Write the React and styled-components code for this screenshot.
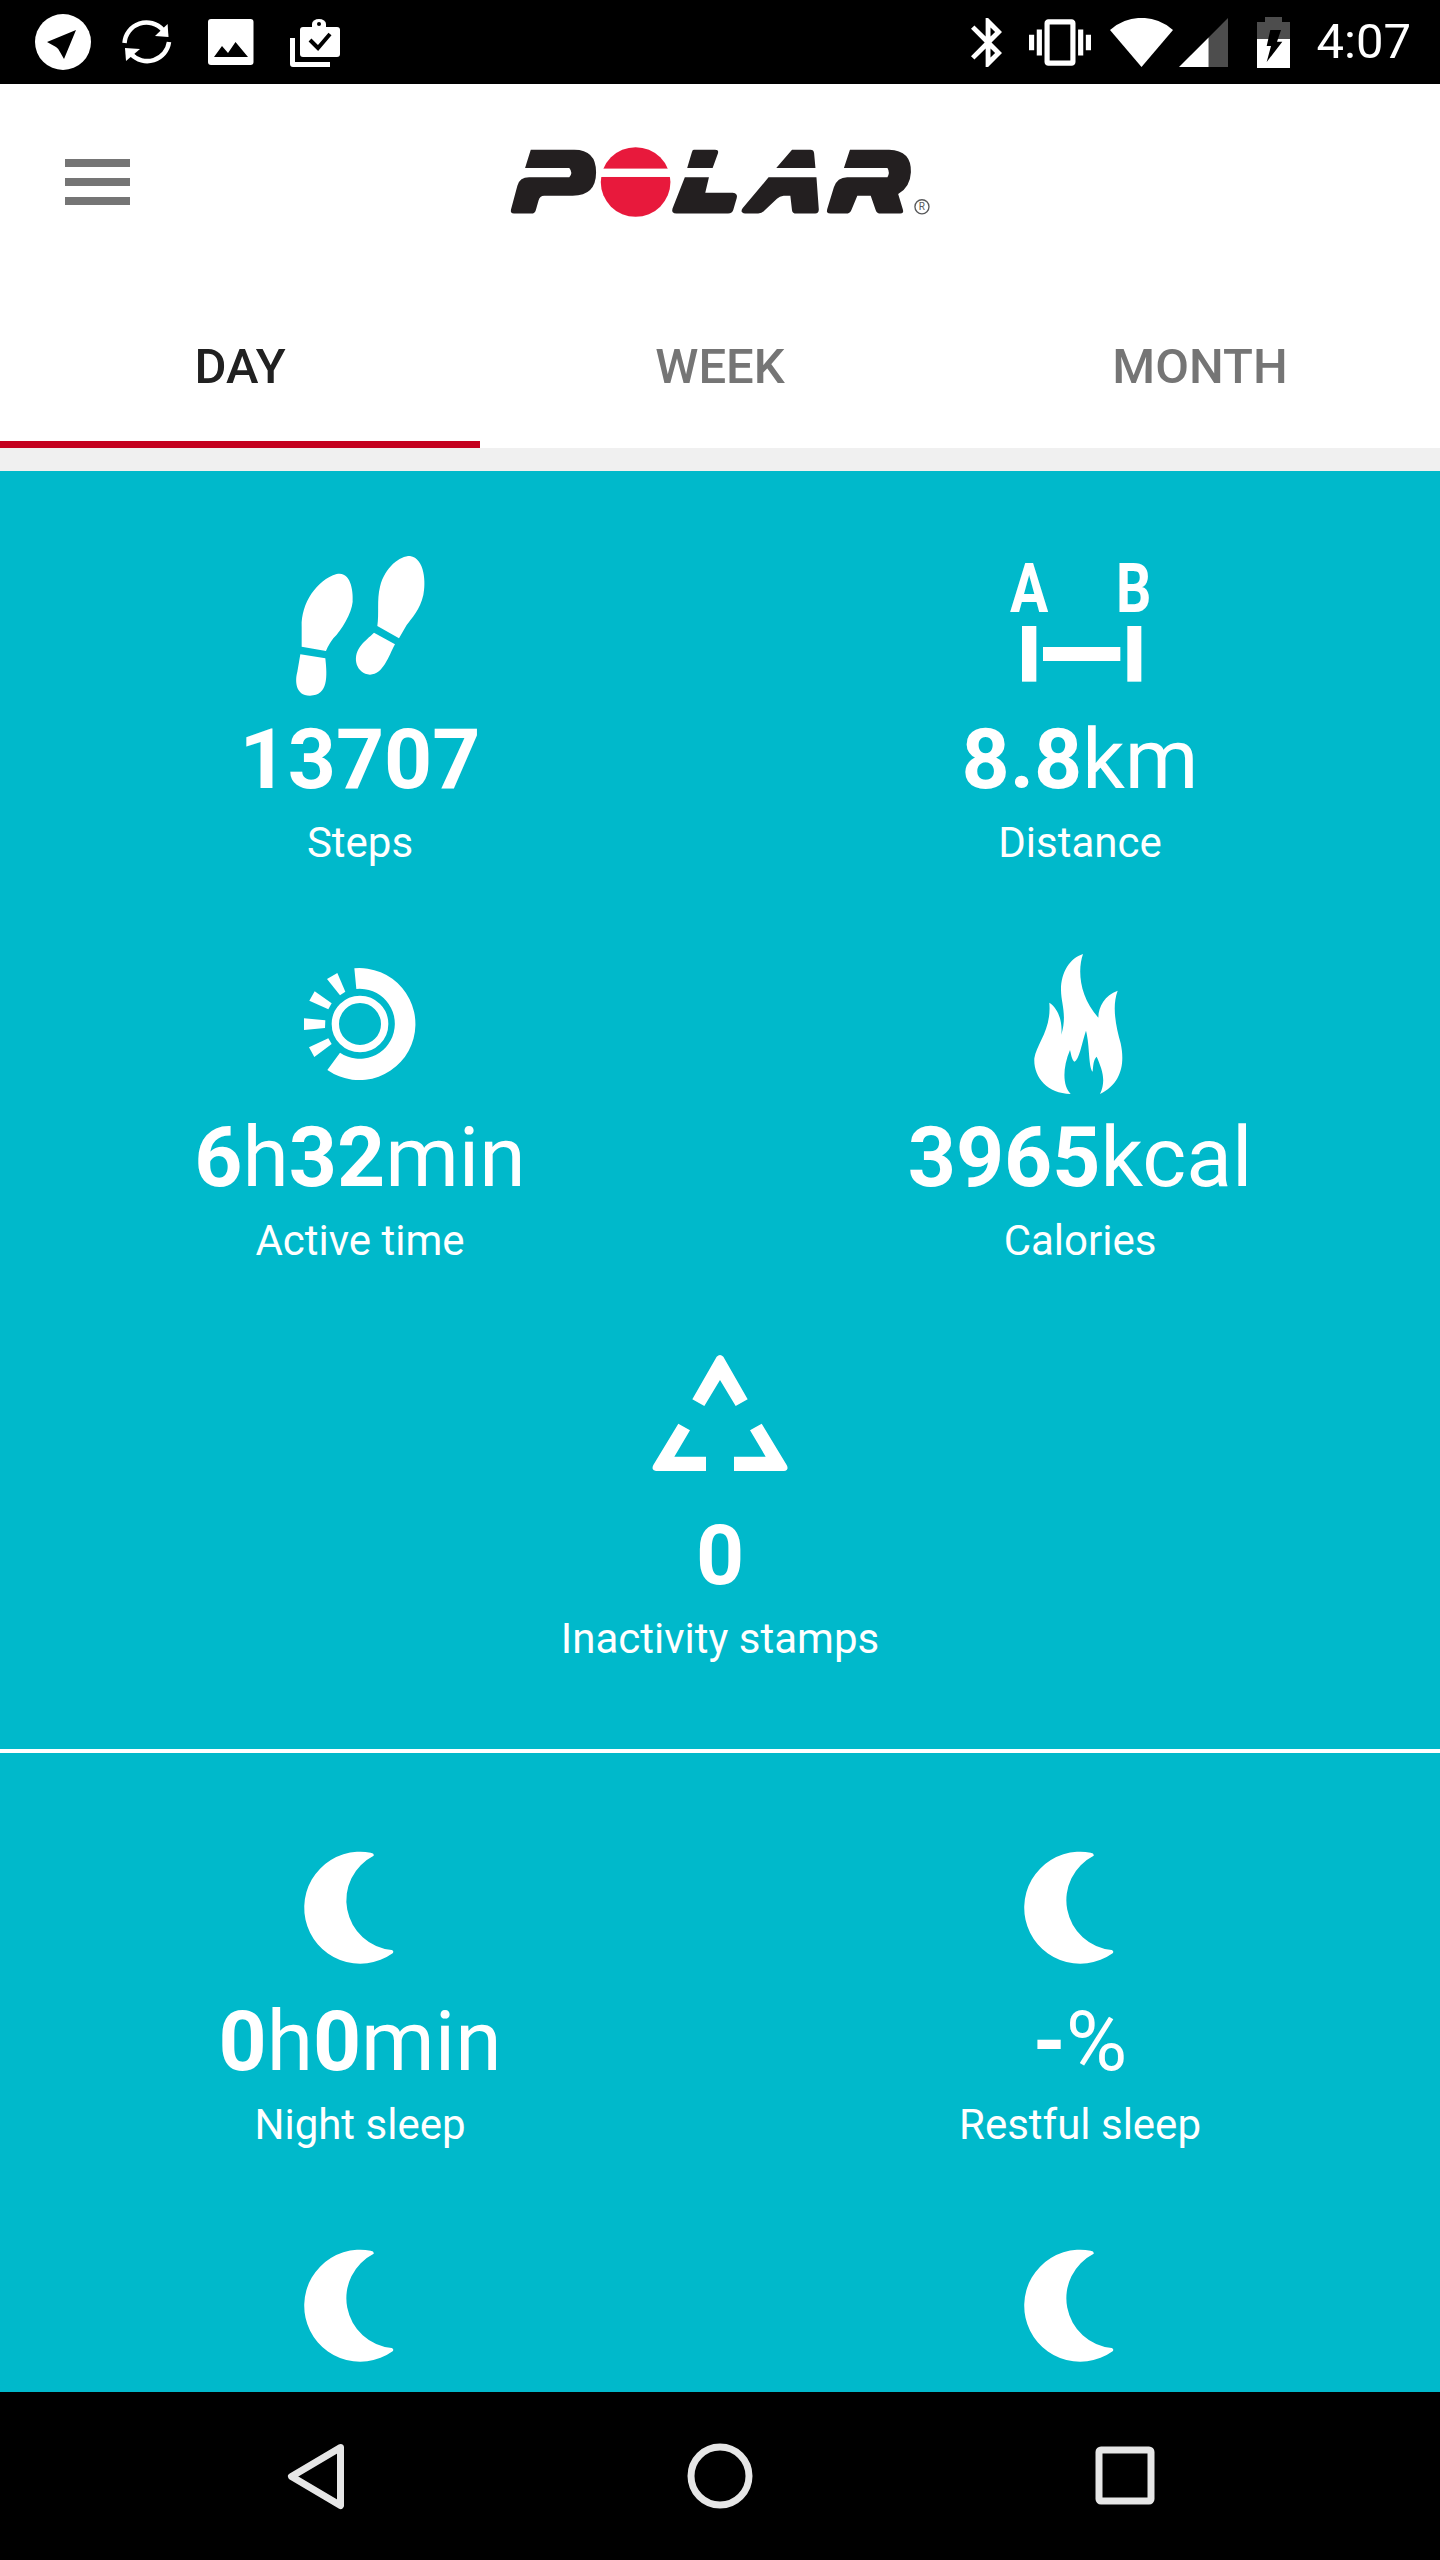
import React from "react";
import styled, { createGlobalStyle } from "styled-components";

const TEAL = "#00b9cb";

const GlobalStyle = createGlobalStyle`
  html, body {
    margin: 0;
    padding: 0;
    background: #000;
  }
  body {
    font-family: Roboto, "Liberation Sans", sans-serif;
  }
`;

// status bar drawings
const NavigationIcon = () => (
  <Slot viewBox="0 0 84 84">
    <circle cx="42" cy="42" r="28" fill="#fff" />
    <path d="M55 30 L26 42 L35 47 Q38 49 39 52 L43 59 Z" fill="#000" />
  </Slot>
);

const SyncIcon = () => (
  <Slot viewBox="0 0 84 84">
    <path d="M19.5 43 A22 22 0 0 1 58 30" fill="none" stroke="#fff" strokeWidth="4.5" />
    <path d="M64 42 A22 22 0 0 1 26 54" fill="none" stroke="#fff" strokeWidth="4.5" />
    <polygon points="62.6,24 63.5,37 50,36" fill="#fff" />
    <polygon points="20,48 35,49 21,61" fill="#fff" />
  </Slot>
);

const ImageIcon = () => (
  <Slot viewBox="0 0 84 84">
    <rect x="19" y="19" width="45.5" height="46" rx="3" fill="#fff" />
    <polygon points="25,57 33,46 39,53 46.5,42 59,57" fill="#000" />
  </Slot>
);

const ClipboardIcon = () => (
  <Slot viewBox="0 0 84 84">
    <path d="M17 38h5v24h35v5H20a3 3 0 0 1-3-3z" fill="#fff" />
    <rect x="27" y="27" width="40" height="30" rx="3" fill="#fff" />
    <path d="M39 28v-4a7 5 0 0 1 14 0v4z" fill="#fff" />
    <circle cx="46" cy="24" r="2" fill="#000" />
    <polyline points="37,40 45,48 57,34" fill="none" stroke="#000" strokeWidth="4" />
  </Slot>
);

const BluetoothIcon = () => (
  <RightIcon width="31" height="49" viewBox="5 2 12.71 20" $gap={0}>
    <path
      fill="#fff"
      d="M17.71 7.71L12 2h-1v7.59L6.41 5 5 6.41 10.59 12 5 17.59 6.41 19 11 14.41V22h1l5.71-5.71-4.3-4.29 4.3-4.29zM13 5.83l1.88 1.88L13 9.59V5.83zm1.88 10.46L13 18.17v-3.76l1.88 1.88z"
    />
  </RightIcon>
);

const VibrateIcon = () => (
  <RightIcon width="62" height="47" viewBox="0 3 24 18" $gap={27}>
    <path
      fill="#fff"
      d="M0 15h2V9H0v6zm3 2h2V7H3v10zm19-8v6h2V9h-2zm-3 8h2V7h-2v10zM16.5 3h-9C6.67 3 6 3.67 6 4.5v15c0 .83.67 1.5 1.5 1.5h9c.83 0 1.5-.67 1.5-1.5v-15c0-.83-.67-1.5-1.5-1.5zM16 19H8V5h8v14z"
    />
  </RightIcon>
);

const WifiIcon = () => (
  <RightIcon width="63" height="49" viewBox="0 0 63 49" $gap={19}>
    <path d="M31.5 49 L0 12 A47 47 0 0 1 63 12 Z" fill="#fff" />
  </RightIcon>
);

const SignalIcon = () => (
  <RightIcon width="49" height="49" viewBox="0 0 49 49" $gap={6}>
    <polygon points="29.6,19.4 49,0 49,49 29.6,49" fill="#4d4d4d" />
    <polygon points="0,49 29.6,19.4 29.6,49" fill="#fff" />
  </RightIcon>
);

const BatteryIcon = () => (
  <RightIcon width="33" height="51" viewBox="0 0 33 51" $gap={29}>
    <path d="M8 0h17v5H33v17H0V5h8z" fill="#4d4d4d" />
    <rect y="22" width="33" height="29" fill="#fff" />
    <polygon points="13.3,13 24,13 20,24.7 25.3,24.7 9.7,45 14,29 9.7,29" fill="#000" />
  </RightIcon>
);

// polar logo, drawn in a 3x coordinate space
const PolarLogo = () => (
  <Logo viewBox="60 50 1260 208" role="img" aria-label="Polar">
    <g fill="#231f20">
      <path d="M125 58H255Q320 58 320 125Q320 195 250 195H165Q152 195 148 210L140 238Q137 248 127 248H75Q63 248 66 236L85 165Q92 140 120 140H240Q252 126 240 112H108Z" />
      <path d="M612 58H675Q687 58 684 68L668 112H592L606 65Q608 58 612 58ZM585 140H657L646 186H728Q744 188 740 202L730 236Q727 248 714 248H560Q544 248 548 234Z" />
      <path d="M905 58H960Q970 58 971 68L975 112H858ZM835 140H978L985 236Q985 248 974 248H918Q906 248 905 238L900 195H880Q868 196 860 204L822 240Q815 248 804 248H765Q748 246 758 232Z" />
      <path d="M1078 58H1195Q1262 60 1260 125Q1258 170 1222 190L1236 236Q1240 248 1228 248H1170Q1158 248 1155 238L1140 195H1100L1082 238Q1078 248 1066 248H1020Q1006 248 1010 235L1030 170Q1040 140 1070 140H1190Q1198 125 1190 112H1060Z" />
    </g>
    <circle cx="438" cy="154" r="104" fill="#e8193c" />
    <rect x="325" y="114" width="226" height="25" fill="#fff" />
    <circle cx="1293" cy="228" r="21" fill="none" stroke="#58595b" strokeWidth="4" />
    <text x="1293" y="239" textAnchor="middle" fontSize="30" fontFamily="Roboto, sans-serif" fill="#58595b">
      R
    </text>
  </Logo>
);

// metric icons, each traced on a 420 unit square
const StepsIcon = () => (
  <MetricIcon viewBox="210 78 420 420">
    <path d="M245 350V290C243 220 290 150 350 132C395 122 400 190 398 215C395 250 365 300 340 325C325 345 318 363 318 363Z" />
    <path d="M241 373L316 385C322 440 325 497 270 497C225 497 225 450 232 425Z" />
    <path d="M472 288C478 250 470 210 480 170C495 110 540 78 570 78C615 85 618 160 610 195C600 240 575 265 560 285L537 325Z" />
    <path d="M462 308L525 343C505 380 490 433 450 434C410 430 395 385 420 350C430 335 450 320 462 308Z" />
  </MetricIcon>
);

const DistanceIcon = () => (
  <MetricIcon viewBox="180 78 420 420">
    <IconLetter x="180" y="245" textLength="115" lengthAdjust="spacingAndGlyphs">A</IconLetter>
    <IconLetter x="498" y="245" textLength="106" lengthAdjust="spacingAndGlyphs">B</IconLetter>
    <rect x="216" y="288" width="43" height="167" />
    <rect x="532" y="288" width="42" height="167" />
    <rect x="279" y="351" width="232" height="42" />
  </MetricIcon>
);

const ActiveIcon = () => (
  <MetricIcon viewBox="90 42 420 420">
    <circle cx="300" cy="252" r="74" fill="none" stroke="#fff" strokeWidth="22" />
    <path d="M283 85A168 168 0 1 1 202 390L240 338A105 105 0 1 0 289 147Z" />
    <polygon points="201,117 232,99 256,155 240,166" />
    <polygon points="148,182 164,154 215,190 205,208" />
    <polygon points="132,235 196,241 195,264 132,270" />
    <polygon points="147,322 205,295 215,312 163,351" />
  </MetricIcon>
);

const FlameIcon = () => (
  <MetricIcon viewBox="60 42 420 420">
    <path d="M279 42C262 90 268 170 325 233C325 200 345 165 383 152C365 200 378 260 392 310C405 370 395 430 330 462C350 420 335 385 320 350C310 360 310 375 308 395C295 380 300 320 288 272C275 310 268 360 253 365C245 360 243 340 240 330C215 390 220 440 242 462C170 460 130 410 133 355C140 310 185 270 178 188C205 205 218 245 214 284C232 225 213 190 213 150C213 95 240 55 279 42Z" />
  </MetricIcon>
);

const StampIcon = () => (
  <MetricIcon viewBox="90 66 420 420">
    <path d="M217 208L290 80Q300 70 310 80L383 208L347 228L300 150L253 228Z" />
    <path d="M175 281L210 301L163 380H258V423H108Q92 420 100 405Z" />
    <path d="M425 281L390 301L437 380H342V423H492Q508 420 500 405Z" />
  </MetricIcon>
);

const MoonIcon = () => (
  <MetricIcon viewBox="30 24 420 420">
    <path d="M272 68Q283 70 281 77A150 150 0 0 0 335 360Q343 363 338 370A168 168 0 1 1 272 68Z" />
  </MetricIcon>
);

const activityMetrics = [
  { icon: <StepsIcon />, parts: [["13707", true]], label: "Steps" },
  { icon: <DistanceIcon />, parts: [["8.8", true], ["km"]], label: "Distance" },
  {
    icon: <ActiveIcon />,
    parts: [["6", true], ["h"], ["32", true], ["min"]],
    label: "Active time",
  },
  { icon: <FlameIcon />, parts: [["3965", true], ["kcal"]], label: "Calories" },
  { icon: <StampIcon />, parts: [["0", true]], label: "Inactivity stamps", wide: true },
];

const sleepMetrics = [
  {
    icon: <MoonIcon />,
    parts: [["0", true], ["h"], ["0", true], ["min"]],
    label: "Night sleep",
  },
  { icon: <MoonIcon />, parts: [["-", true], ["%"]], label: "Restful sleep" },
  { icon: <MoonIcon /> },
  { icon: <MoonIcon /> },
];

const Metric = ({ icon, parts, label, wide }) => (
  <Cell $wide={wide}>
    {icon}
    {parts && (
      <Value>
        {parts.map(([text, strong], key) =>
          strong ? <Strong key={key}>{text}</Strong> : <span key={key}>{text}</span>
        )}
      </Value>
    )}
    {label && <Label>{label}</Label>}
  </Cell>
);

const App = () => (
  <Screen>
    <GlobalStyle />
    <StatusBar>
      <StatusGroup>
        <NavigationIcon />
        <SyncIcon />
        <ImageIcon />
        <ClipboardIcon />
      </StatusGroup>
      <StatusRight>
        <BluetoothIcon />
        <VibrateIcon />
        <WifiIcon />
        <SignalIcon />
        <BatteryIcon />
        <Clock>4:07</Clock>
      </StatusRight>
    </StatusBar>

    <Toolbar>
      <Hamburger aria-label="Menu">
        <span />
        <span />
        <span />
      </Hamburger>
      <PolarLogo />
    </Toolbar>

    <Tabs>
      <Tab $active>DAY</Tab>
      <Tab>WEEK</Tab>
      <Tab>MONTH</Tab>
    </Tabs>
    <TabShadow />

    <Content>
      <MetricGrid>
        {activityMetrics.map((m, key) => (
          <Metric key={`activity_${key}`} {...m} />
        ))}
      </MetricGrid>
      <Divider />
      <MetricGrid>
        {sleepMetrics.map((m, key) => (
          <Metric key={`sleep_${key}`} {...m} />
        ))}
      </MetricGrid>
    </Content>

    <NavBar>
      <NavIcon viewBox="0 0 84 84">
        <polygon points="66.5,13.5 17.5,42.5 66.5,71.5" />
      </NavIcon>
      <NavIcon viewBox="0 0 84 84">
        <circle cx="42" cy="42" r="29" />
      </NavIcon>
      <NavIcon viewBox="0 0 84 84">
        <rect x="17" y="16" width="52" height="51" rx="2" />
      </NavIcon>
    </NavBar>
  </Screen>
);

export default App;

const Screen = styled.div`
  display: flex;
  flex-direction: column;
  width: 1440px;
  height: 2560px;
  overflow: hidden;
  background: #fff;
`;

const StatusBar = styled.div`
  display: flex;
  justify-content: space-between;
  align-items: center;
  flex: 0 0 84px;
  padding: 0 29px 0 21px;
  background: #000;
`;

const StatusGroup = styled.div`
  display: flex;
`;

const StatusRight = styled.div`
  display: flex;
  align-items: center;
`;

const Slot = styled.svg`
  display: block;
  width: 84px;
  height: 84px;
`;

const RightIcon = styled.svg`
  display: block;
  flex: none;
  margin-left: ${({ $gap }) => $gap}px;
`;

const Clock = styled.div`
  margin-left: 27px;
  color: #fff;
  font-size: 49px;
  line-height: 84px;
`;

const Toolbar = styled.div`
  display: grid;
  grid-template-columns: 1fr auto 1fr;
  align-items: center;
  flex: 0 0 196px;
`;

const Hamburger = styled.div`
  display: flex;
  flex-direction: column;
  gap: 11px;
  width: 65px;
  margin-left: 65px;

  span {
    display: block;
    height: 8px;
    background: #757575;
  }
`;

const Logo = styled.svg`
  display: block;
  width: 422px;
  height: 70px;
`;

const Tabs = styled.div`
  display: grid;
  grid-template-columns: repeat(3, 1fr);
  flex: 0 0 168px;
`;

const Tab = styled.div`
  display: flex;
  align-items: center;
  justify-content: center;
  box-sizing: border-box;
  padding-top: 12px;
  border-bottom: 7px solid ${({ $active }) => ($active ? "#c4001f" : "transparent")};
  color: ${({ $active }) => ($active ? "#212121" : "#757575")};
  font-size: 49px;
  font-weight: 500;
`;

const TabShadow = styled.div`
  flex: 0 0 23px;
  background: #f0f0f0;
`;

const Content = styled.div`
  flex: 1;
  min-height: 0;
  overflow: hidden;
  background: ${TEAL};
`;

const MetricGrid = styled.div`
  display: grid;
  grid-template-columns: 1fr 1fr;
  grid-auto-rows: 398px;
  padding-top: 85px;
`;

const Divider = styled.div`
  height: 4px;
  margin-top: -1px;
  background: #fff;
`;

const Cell = styled.div`
  display: flex;
  flex-direction: column;
  align-items: center;
  grid-column: ${({ $wide }) => ($wide ? "1 / span 2" : "auto")};
  color: #fff;
`;

const MetricIcon = styled.svg`
  display: block;
  flex: none;
  width: 140px;
  height: 140px;
  overflow: visible;
  fill: #fff;
`;

const IconLetter = styled.text`
  font-family: Roboto, sans-serif;
  font-size: 208px;
  font-weight: 700;
`;

const Value = styled.div`
  margin-top: 14px;
  font-size: 84px;
  line-height: 100px;
  white-space: nowrap;
`;

const Strong = styled.span`
  font-weight: 700;
`;

const Label = styled.div`
  margin-top: 8px;
  font-size: 42px;
  line-height: 50px;
`;

const NavBar = styled.div`
  display: flex;
  justify-content: center;
  align-items: center;
  gap: 320px;
  flex: 0 0 168px;
  background: #000;
`;

const NavIcon = styled.svg`
  display: block;
  width: 84px;
  height: 84px;
  fill: none;
  stroke: #e6e6e6;
  stroke-width: 7;
  stroke-linejoin: round;
`;
